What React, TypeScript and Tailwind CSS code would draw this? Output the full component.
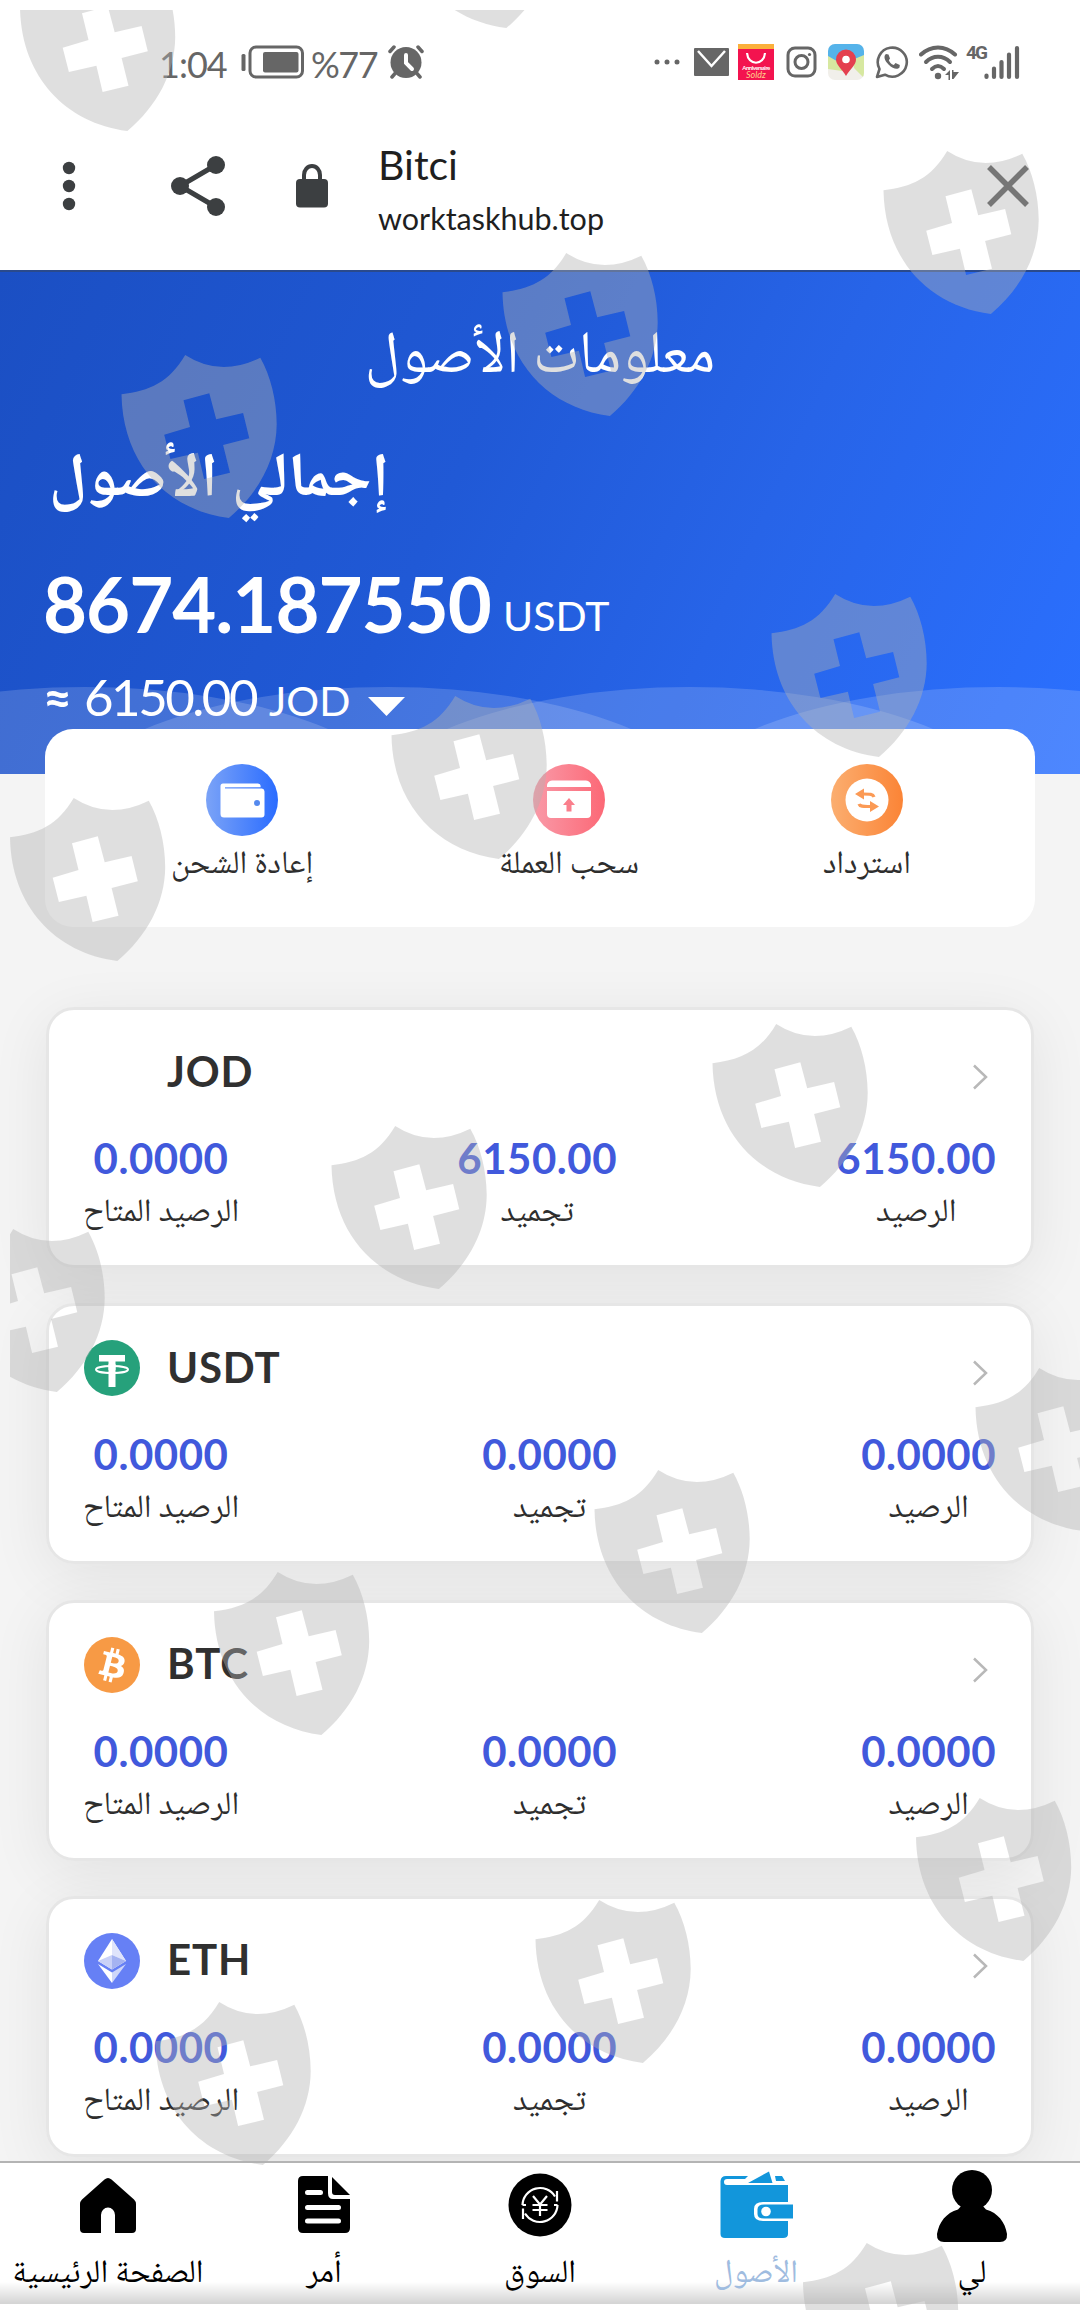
import type { ReactNode } from 'react'

const ARABIC = "font-['Noto_Naskh_Arabic','Noto_Sans_Arabic','DejaVu_Sans',sans-serif]"

const shields = [
    [20, -32], [399, -135], [883.5, 151], [502.5, 253], [121.5, 355], [771.5, 594], [391.5, 696], [10, 798], [712.5, 1024],
    [331.5, 1126], [-50.5, 1229], [975.5, 1368], [594.5, 1470], [214, 1572], [916, 1798], [535.5, 1900], [155.5, 2002], [803, 2243],
]

function ShieldOverlay() {
    return (
        <svg className="absolute left-0 top-0 w-[1080px] h-[2310px] pointer-events-none" viewBox="0 0 1080 2310">
            <clipPath id="page">
                <rect x="10" y="10" width="1070" height="2300" />
            </clipPath>
            <g clipPath="url(#page)" fill="#b1b1b1" fillOpacity="0.41" fillRule="evenodd">
                {shields.map(([x, y]) => (
                    <path
                        key={`${x}-${y}`}
                        transform={`translate(${x} ${y})`}
                        d="M0 39.3C28 36 48 27 63.7 0Q98.5 22.6 138.8 2.7C149 21 155 44 155.2 69C155 105 137 138 107.4 163C45 155 1 108 0 39.3Z
                           M62 45.3L87.8 38.3L94.7 64.3L121.6 58L127.8 83.3L101.6 90L108.5 117.7L82.6 124L76.4 97.7L48.9 104L42.7 79.7L68.5 72Z"
                    />
                ))}
            </g>
        </svg>
    )
}

/* ===== STATUS BAR ===== */
function StatusBar() {
    return (
        <div className="flex items-center h-[124px] text-[#666]">
            <span className="ml-[159px] w-[82px] pt-[3px] text-[36px] leading-none tracking-[-1px]">1:04</span>
            <svg width="63" height="34" viewBox="0 0 63 34">
                <rect x="0.5" y="9" width="4" height="17" rx="1.5" fill="currentColor" />
                <rect x="9" y="2" width="52.5" height="30" rx="6" fill="none" stroke="currentColor" strokeWidth="3" />
                <rect x="22" y="7" width="35.5" height="20.5" rx="2" fill="currentColor" />
            </svg>
            <span className="ml-[7px] w-[77px] pt-[3px] text-[36px] leading-none tracking-[-1.5px]">%77</span>
            <svg width="36" height="34" viewBox="0 0 36 34">
                <circle cx="18" cy="17.5" r="15.5" fill="currentColor" />
                <path d="M18 10V18L24 24" fill="none" stroke="#fff" strokeWidth="4" strokeLinecap="round" />
                <path d="M2 6.5L6 2M30 2L34 6.5M4 32L7 28.5M32 32L29 28.5" stroke="currentColor" strokeWidth="3.5" strokeLinecap="round" />
            </svg>
            <svg className="ml-[230px]" width="26" height="6" viewBox="0 0 26 6" fill="currentColor">
                <circle cx="3" cy="3" r="2.5" />
                <circle cx="13" cy="3" r="2.5" />
                <circle cx="23" cy="3" r="2.5" />
            </svg>
            <svg className="ml-[14px]" width="35" height="28" viewBox="0 0 35 28">
                <rect width="35" height="28" rx="1" fill="currentColor" />
                <path d="M4 3L17.5 18L31 3" fill="none" stroke="#fff" strokeWidth="2.5" />
            </svg>
            {/* Shopping app badge */}
            <div className="ml-[9px] w-9 h-9 bg-[#f3134f] border-t-[5px] border-[#fbb03b] flex flex-col items-center text-white overflow-hidden">
                <svg className="shrink-0 mt-[3px]" width="22" height="13" viewBox="0 0 22 13">
                    <path d="M2 1C3 14 19 14 20 1" fill="none" stroke="#fff" strokeWidth="2.2" />
                </svg>
                <span className="text-[6px] leading-[6px] font-bold tracking-[-0.5px]">Anniversaire</span>
                <span className="text-[9px] leading-[8px] italic text-[#ffd08a]">Soldz</span>
            </div>
            <svg className="ml-[12px]" width="31" height="32" viewBox="0 0 31 32" fill="none" stroke="currentColor" strokeWidth="3">
                <rect x="2" y="2" width="27" height="28" rx="7" />
                <circle cx="15.5" cy="16" r="6.5" />
                <circle cx="23.5" cy="8.5" r="1.6" fill="currentColor" stroke="none" />
            </svg>
            <svg className="ml-[11px]" width="36" height="36" viewBox="0 0 36 36">
                <clipPath id="map">
                    <rect width="36" height="36" rx="7" />
                </clipPath>
                <g clipPath="url(#map)">
                    <rect width="36" height="36" fill="#f1efea" />
                    <path d="M0 0H36V14L18 17L0 24Z" fill="#55b3ea" />
                    <path d="M0 12L14 20V27L0 25ZM24 16L36 11V34L26 24Z" fill="#d7e8a0" />
                    <path d="M18 32C14 25 8 21 8 15.5A10 10 0 0 1 28 15.5C28 21 22 25 18 32Z" fill="#e4404f" />
                    <circle cx="18" cy="15.5" r="3.8" fill="#fff" />
                </g>
            </svg>
            <svg className="ml-[11px]" width="34" height="34" viewBox="0 0 34 34" fill="none" stroke="currentColor" strokeWidth="2.6">
                <path d="M2 32L4.5 24A14.5 14.5 0 1 1 10 29.7Z" strokeLinejoin="round" />
                <path d="M11 9C8.5 11 9 15 13.5 19.5C18 24 22.5 25 24.5 22.5L24.8 20L20.5 18L18.8 20C16 19 14.5 17 13.8 15.2L15 13.5L13.5 9.5Z" fill="currentColor" stroke="none" />
            </svg>
            <svg className="ml-[10px]" width="42" height="35" viewBox="0 0 42 35">
                <g fill="none" stroke="currentColor" strokeWidth="4" strokeLinecap="round">
                    <path d="M2 9.5C12 0 26 0 36 9.5" />
                    <path d="M7 17C14 10 24 10 31 17" />
                    <path d="M13 24C17 20 21 20 25 24" />
                </g>
                <circle cx="19" cy="31" r="3.2" fill="currentColor" />
                <path d="M26 30L31 25V35H29.5V30ZM33 25H34.5V27H40L34.5 34H33Z" fill="currentColor" />
            </svg>
            <span className="ml-[5px] mb-[20px] w-[18px] text-[19px] leading-none font-bold tracking-[-2px] font-['Roboto',sans-serif]">4G</span>
            <svg width="36" height="35" viewBox="0 0 36 35" stroke="currentColor" strokeWidth="4.2" strokeLinecap="round">
                <path d="M2.5 30.5V32M10 23.5V32M17.5 17V32M25 9.5V32M33 3V32" />
            </svg>
        </div>
    )
}

/* ===== BROWSER BAR ===== */
function BrowserBar() {
    return (
        <div className="flex items-center h-[124px] text-[#3c3f41]">
            <svg className="ml-[62px]" width="14" height="50" viewBox="0 0 14 50" fill="currentColor">
                <circle cx="7" cy="7" r="6.2" />
                <circle cx="7" cy="25" r="6.2" />
                <circle cx="7" cy="43" r="6.2" />
            </svg>
            <svg className="ml-[95px]" width="54" height="62" viewBox="0 0 54 62" fill="currentColor">
                <path d="M45 10L9 31L45 52" fill="none" stroke="currentColor" strokeWidth="5" />
                <circle cx="45" cy="10" r="9" />
                <circle cx="9" cy="31" r="9" />
                <circle cx="45" cy="52" r="9" />
            </svg>
            <svg className="ml-[71px]" width="32" height="44" viewBox="0 0 32 44">
                <rect y="15" width="32" height="28.5" rx="4" fill="currentColor" />
                <path d="M8 18V11A8 9 0 0 1 24 11V18" fill="none" stroke="currentColor" strokeWidth="4" />
            </svg>
            <div className="ml-[50px] w-[560px] pt-[5px] text-[#1f1f1f]">
                <div className="text-[41px] leading-[50px]">Bitci</div>
                <div className="mt-[8px] text-[30.5px] leading-[40px]">worktaskhub.top</div>
            </div>
            <svg className="ml-[49px]" width="42" height="42" viewBox="0 0 42 42" stroke="#4d4d4d" strokeWidth="5.5">
                <path d="M2 2L40 40M40 2L2 40" />
            </svg>
        </div>
    )
}

/* ===== BALANCE HEADER ===== */
function BalanceHeader() {
    return (
        <div className="relative h-[504px] overflow-hidden text-white bg-[linear-gradient(115deg,#1b4fc3_0%,#2059d6_42%,#2764e8_67%,#2b70ff_100%)] border-t-2 border-[#2a4a8c]">
            <svg className="absolute left-0 bottom-0" width="1080" height="90" viewBox="0 0 1080 90" fill="#fff" fillOpacity="0.16">
                <ellipse cx="85" cy="133" rx="330" ry="130" />
                <ellipse cx="388" cy="133" rx="330" ry="130" />
                <ellipse cx="690" cy="133" rx="330" ry="130" />
                <ellipse cx="998" cy="133" rx="330" ry="130" />
            </svg>
            <div className="relative flex flex-col">
                <h1 className={`${ARABIC} mt-[49px] h-[76px] text-center text-[59.5px] leading-[76px]`}>معلومات الأصول</h1>
                <h2 className={`${ARABIC} mt-[48px] ml-[49px] h-[76px] w-[345px] text-left text-[62px] leading-[76px] font-bold whitespace-nowrap`}>إجمالي الأصول</h2>
                <div className="mt-[37px] ml-[43px] flex items-baseline">
                    <span className="w-[460px] text-[76px] leading-[92px] font-bold tracking-[-1px]">8674.187550</span>
                    <span className="relative -top-[2px] text-[41px]">USDT</span>
                </div>
                <div className="mt-[17px] ml-[43px] flex items-baseline">
                    <span className="w-[41px] text-[50px] leading-[60px] font-bold">≈</span>
                    <span className="w-[185px] text-[51px] leading-[60px] tracking-[-2.5px]">6150.00</span>
                    <span className="text-[41px] leading-[60px]">JOD</span>
                    <svg className="ml-[18px] mb-[2px]" width="37" height="19" viewBox="0 0 37 19">
                        <path d="M0 0H37L18.5 19Z" fill="#fff" />
                    </svg>
                </div>
            </div>
        </div>
    )
}

const actions = [
    {
        label: "إعادة الشحن",
        from: '#7ba3f7',
        to: '#2a6cff',
        glyph: (
            <>
                <path d="M17 19.5H52A3 3 0 0 1 54.5 23.2H19V24.5H56A3 3 0 0 1 58.5 27.5V50.5A3 3 0 0 1 55.5 53.5H18A3.5 3.5 0 0 1 14.5 50V22A2.5 2.5 0 0 1 17 19.5Z" fill="#fff" />
                <circle cx="51" cy="39" r="3" fill="#5489ee" />
            </>
        ),
    },
    {
        label: "سحب العملة",
        from: '#f99aa8',
        to: '#fc6876',
        glyph: (
            <>
                <path d="M14 22A5 5 0 0 1 19 16.5H53A5 5 0 0 1 58 22V23H14ZM14 27H58V50A4 4 0 0 1 54 54H18A4 4 0 0 1 14 50Z" fill="#fff" />
                <path d="M36 34L42 41H38.5V47.5H33.5V41H30Z" fill="#fa7f8c" />
            </>
        ),
    },
    {
        label: "استرداد",
        from: '#fbae70',
        to: '#fb8436',
        glyph: (
            <>
                <circle cx="36" cy="36" r="21.5" fill="#fff" />
                <path d="M43 33C42 30 39 30 32 30M28 40C29 43 33 42.5 40 42.5" fill="none" stroke="#fb9a55" strokeWidth="3.2" />
                <path d="M24 30L33 24.5V35.5ZM48 42.5L39 37V48Z" fill="#fb9a55" />
            </>
        ),
    },
]

function ActionCard() {
    return (
        <div className="relative -mt-[45px] mx-[45px] h-[198px] rounded-[28px] bg-white grid grid-cols-[394px_260px_336px] pt-[35px]">
            {actions.map((item, index) => (
                <div key={item.label} className="flex flex-col items-center">
                    <svg width="72" height="72" viewBox="0 0 72 72">
                        <linearGradient id={`action-${index}`}>
                            <stop offset="0" stopColor={item.from} />
                            <stop offset="1" stopColor={item.to} />
                        </linearGradient>
                        <circle cx="36" cy="36" r="36" fill={`url(#action-${index})`} />
                        {item.glyph}
                    </svg>
                    <span className={`${ARABIC} mt-[6px] h-[48px] text-[32.3px] leading-[48px] text-[#2e2e2e] whitespace-nowrap`}>{item.label}</span>
                </div>
            ))}
        </div>
    )
}

/* ===== ASSETS ===== */
const usdtIcon = (
    <svg width="56" height="56" viewBox="0 0 56 56">
        <circle cx="28" cy="28" r="28" fill="#26a17b" />
        <path d="M15 15H41V21.5H31.5V47H24.5V21.5H15Z" fill="#fff" />
        <ellipse cx="28" cy="29.5" rx="16" ry="3.6" fill="none" stroke="#fff" strokeWidth="2" />
        <path d="M24.5 24H31.5V30H24.5Z" fill="#fff" />
    </svg>
)

const btcIcon = (
    <svg width="56" height="56" viewBox="0 0 32 32">
        <circle cx="16" cy="16" r="16" fill="#f79a45" />
        <path
            fill="#fff"
            d="M23.189 14.02c.314-2.096-1.283-3.223-3.465-3.975l.708-2.84-1.728-.43-.69 2.765c-.454-.114-.92-.22-1.385-.326l.695-2.783L15.596 6l-.708 2.839c-.376-.086-.746-.17-1.104-.26l.002-.009-2.384-.595-.46 1.846s1.283.294 1.256.312c.7.175.826.638.805 1.006l-.806 3.235c.048.012.11.03.18.057l-.183-.045-1.13 4.532c-.086.212-.303.531-.793.41.018.025-1.256-.313-1.256-.313l-.858 1.978 2.25.561c.418.105.828.215 1.231.318l-.715 2.872 1.727.43.708-2.84c.472.127.93.245 1.378.357l-.706 2.828 1.728.43.715-2.866c2.948.558 5.164.333 6.097-2.333.752-2.146-.037-3.385-1.588-4.192 1.13-.26 1.98-1.003 2.207-2.538zm-3.95 5.538c-.533 2.147-4.148.986-5.32.695l.95-3.805c1.172.293 4.929.872 4.37 3.11zm.535-5.569c-.487 1.953-3.495.96-4.47.717l.86-3.45c.975.243 4.118.696 3.61 2.733z"
        />
    </svg>
)

const ethIcon = (
    <svg width="56" height="56" viewBox="0 0 56 56">
        <circle cx="28" cy="28" r="28" fill="#6680f5" />
        <path d="M28 6L42 28L28 36.5L14 28Z" fill="#fff" />
        <path d="M28 6L42 28L28 22Z" fill="#dfe4fb" />
        <path d="M14 28L28 22V36.5Z" fill="#c9d1f7" />
        <path d="M28 22L42 28L28 36.5Z" fill="#a5b3f1" />
        <path d="M14 31L28 39.5V50Z" fill="#fff" />
        <path d="M42 31L28 39.5V50Z" fill="#cfd7f9" />
    </svg>
)

interface Asset {
    name: string
    icon: ReactNode
    available: string
    frozen: string
    balance: string
}

const assets: Asset[] = [
    { name: "JOD", icon: null, available: "0.0000", frozen: "6150.00", balance: "6150.00" },
    { name: "USDT", icon: usdtIcon, available: "0.0000", frozen: "0.0000", balance: "0.0000" },
    { name: "BTC", icon: btcIcon, available: "0.0000", frozen: "0.0000", balance: "0.0000" },
    { name: "ETH", icon: ethIcon, available: "0.0000", frozen: "0.0000", balance: "0.0000" },
]

function Amount({ value, label, className = '' }: { value: string; label: string; className?: string }) {
    return (
        <div className={`flex flex-col items-center ${className}`}>
            <span className="text-[42px] leading-[50px] tracking-[0.5px] font-bold text-[#4159dc]">{value}</span>
            <span className={`${ARABIC} mt-[7px] h-[48px] text-[32.5px] leading-[48px] text-[#2e2e2e] whitespace-nowrap`}>{label}</span>
        </div>
    )
}

function AssetCard({ asset }: { asset: Asset }) {
    return (
        <div className="relative h-[261px]">
            <div className="absolute inset-0 -z-10 rounded-[28px] shadow-[0_12px_60px_rgba(0,0,0,0.075)]" />
            <div className="h-full rounded-[28px] bg-white border-[3px] border-[#e6e6e6] pl-[35px] pr-[35px] pt-[34px]">
                <div className="flex items-center h-[56px]">
                    <div className="w-[56px] h-[56px]">{asset.icon}</div>
                    <span className="ml-[27px] mb-[3px] text-[42px] leading-none tracking-[0.8px] font-bold text-[#303030]">{asset.name}</span>
                    <svg className="ml-auto mr-[7px] mt-[10px]" width="17" height="26" viewBox="0 0 17 26">
                        <path d="M2 1.5L14 13L2 24.5" fill="none" stroke="#b8b8b8" strokeWidth="2.5" />
                    </svg>
                </div>
                <div className="mt-[33px] flex justify-between">
                    <Amount value={asset.available} label="الرصيد المتاح" className="w-[154px]" />
                    <Amount value={asset.frozen} label="تجميد" />
                    <Amount value={asset.balance} label="الرصيد" />
                </div>
            </div>
        </div>
    )
}

/* ===== BOTTOM NAV ===== */
const tabs = [
    {
        label: "الصفحة الرئيسية",
        icon: (
            <svg width="58" height="72" viewBox="0 0 58 72">
                <path d="M25.5 9.5Q29 6.5 32.5 9.5L55 29.5Q57 31.5 57 34V59Q57 63 53 63H36V45A7 7.5 0 0 0 22 45V63H5Q1 63 1 59V34Q1 31.5 3 29.5Z" />
            </svg>
        ),
    },
    {
        label: "أمر",
        icon: (
            <svg width="54" height="72" viewBox="0 0 54 72">
                <path d="M6 6H31V23Q31 29 36 29H53V58Q53 63 48 63H6Q1 63 1 58V11Q1 6 6 6ZM35 7L53 25H38Q35 25 35 22Z" />
                <path d="M10.5 22.5H23.5M10.5 37.5H41.5M10.5 51H41.5" stroke="#fff" strokeWidth="5" strokeLinecap="round" />
            </svg>
        ),
    },
    {
        label: "السوق",
        icon: (
            <svg width="64" height="72" viewBox="0 0 64 72">
                <circle cx="32" cy="35" r="31.5" />
                <g fill="none" stroke="#fff" strokeWidth="2.2">
                    <path d="M14.5 35A17.5 17.5 0 0 1 47 26.5M49.5 35A17.5 17.5 0 0 1 17 43.5" />
                    <path d="M49 21V31.5M15 49V38.5M14.5 35H18M46 35H49.5" />
                    <path d="M25 26L32 34.5L39 26M32 34.5V46M24.5 35H39.5M24.5 40H39.5" />
                </g>
            </svg>
        ),
    },
    {
        label: "الأصول",
        active: true,
        icon: (
            <svg width="73" height="72" viewBox="0 0 73 72" fill="#1296db">
                <path d="M6 6H28L25 9H7A3 3 0 0 0 7 15H68V32H43Q34 32 34 39V44Q34 51 43 51H68V64Q68 68 63 68H5Q0.5 68 0.5 64V11Q1 6 6 6Z" />
                <path d="M28 13L49 1.5L52.5 13ZM55 6H62L65 11H56Z" />
                <path d="M73 34.5H44Q37.5 34.5 37.5 39.5V44Q37.5 48.5 44 48.5H73Z" />
                <circle cx="46" cy="41.5" r="4.8" fill="#fff" />
            </svg>
        ),
    },
    {
        label: "لي",
        icon: (
            <svg width="72" height="74" viewBox="0 0 72 74">
                <circle cx="36" cy="20" r="20" />
                <path d="M27 34H45L50 39.5C62 43 69 52 71 64Q71.5 72 64 72H8Q0.5 72 1 64C3 52 10 43 22 39.5Z" />
            </svg>
        ),
    },
]

function BottomNav() {
    return (
        <nav className="absolute left-0 top-[2161px] w-[1080px] h-[143px] border-t-2 border-[#b4b4b4] bg-[linear-gradient(to_bottom,#fff_0,#fff_119px,#d5d5d5_140px)] grid grid-cols-5">
            {tabs.map((tab) => (
                <div key={tab.label} className="flex flex-col items-center">
                    <div className="h-[84px] pt-[7px] flex items-start">{tab.icon}</div>
                    <span className={`${ARABIC} text-[32.3px] leading-[56px] whitespace-nowrap ${tab.active ? 'text-[#9fbce0]' : 'text-black'}`}>{tab.label}</span>
                </div>
            ))}
        </nav>
    )
}

export default function App() {
    return (
        <div className="relative w-[1080px] h-[2310px] overflow-hidden bg-white font-['Lato',sans-serif]">
            <div className="h-[270px]">
                <StatusBar />
                <BrowserBar />
            </div>
            <main className="h-[2034px] overflow-hidden bg-[#f4f4f4]">
                <BalanceHeader />
                <ActionCard />
                <div className="isolate mt-[80px] ml-[46px] w-[988px] flex flex-col gap-[35.3px]">
                    {assets.map((asset) => (
                        <AssetCard key={asset.name} asset={asset} />
                    ))}
                </div>
            </main>
            <BottomNav />
            <ShieldOverlay />
        </div>
    )
}
